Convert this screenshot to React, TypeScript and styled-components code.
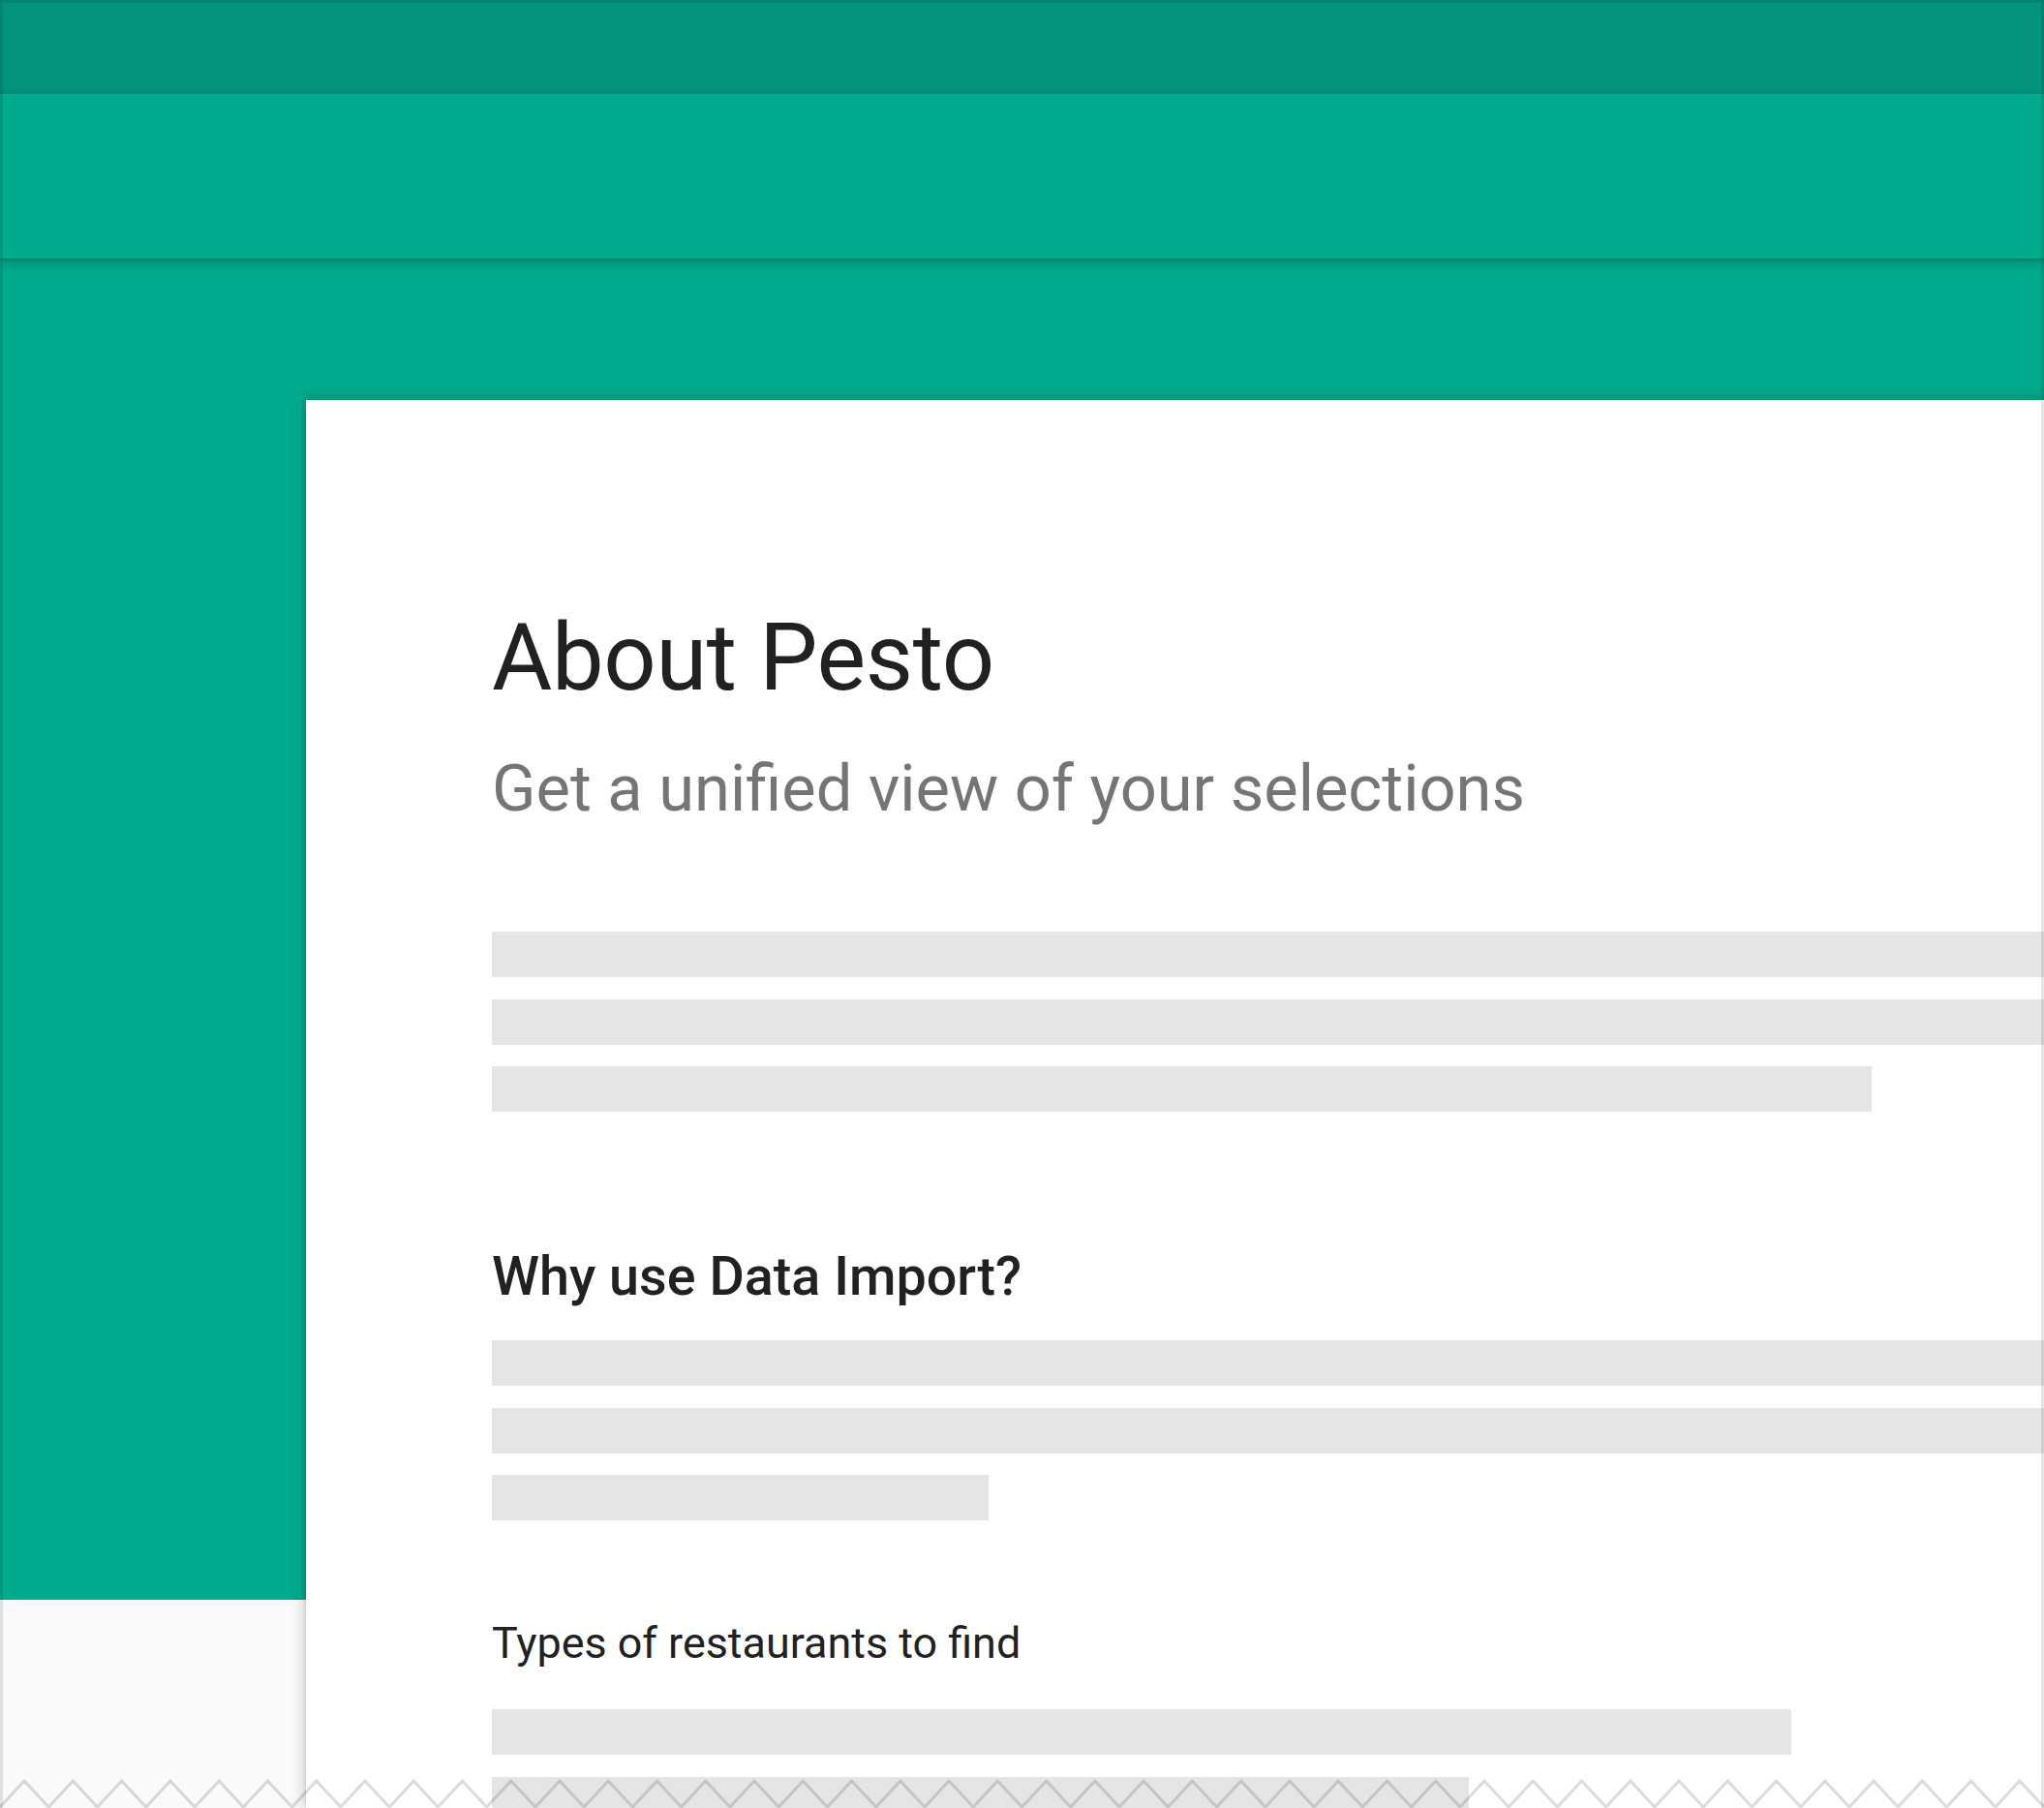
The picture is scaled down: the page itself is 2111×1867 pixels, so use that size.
import React from "react";
import styled, { createGlobalStyle } from "styled-components";

const Global = createGlobalStyle`
  html, body { margin: 0; padding: 0; background: #ffffff; overflow: hidden; }
  * { box-sizing: border-box; }
`;

const Frame = styled.div`
  position: relative;
  width: 2111px;
  height: 1867px;
  overflow: hidden;
  font-family: Roboto, "Liberation Sans", Arial, sans-serif;
  display: flex;
  flex-direction: column;
  background: #fafafa;
  &::after {
    content: "";
    position: absolute;
    inset: 0;
    border: 3px solid rgba(0, 0, 0, 0.1);
    border-bottom: none;
    pointer-events: none;
    z-index: 5;
  }
`;

const StatusBar = styled.div`
  height: 97px;
  flex: none;
  background: #03947d;
`;

const AppBar = styled.div`
  position: relative;
  z-index: 2;
  height: 170px;
  flex: none;
  background: #00aa8d;
  box-shadow: 0 1px 2px rgba(0, 0, 0, 0.22), 0 4px 10px rgba(0, 0, 0, 0.22);
`;

const Body = styled.div`
  flex: 1;
  min-height: 0;
  background: linear-gradient(#00aa8d 0 1385px, #fafafa 1385px);
  padding: 146px 0 0 316px;
  display: flex;
`;

const Card = styled.div`
  width: 1900px;
  flex: none;
  background: #ffffff;
  box-shadow: 0 0 14px rgba(0, 0, 0, 0.25), 0 0 2px rgba(0, 0, 0, 0.15);
  padding: 219px 0 0 192px;
  display: flex;
  flex-direction: column;
  align-items: flex-start;
`;

const Title = styled.h1`
  margin: 0;
  font-size: 95.5px;
  line-height: 1;
  font-weight: 400;
  color: #212121;
  letter-spacing: -0.3px;
`;

const Subtitle = styled.p`
  margin: 53px 0 0;
  font-size: 66.8px;
  line-height: 1;
  font-weight: 400;
  color: #757575;
`;

const Heading = styled.h2<{ $gap: number }>`
  margin: ${(p) => p.$gap}px 0 0;
  font-size: 55.7px;
  line-height: 1;
  font-weight: 500;
  color: #212121;
`;

const Label = styled.p<{ $gap: number }>`
  margin: ${(p) => p.$gap}px 0 0;
  font-size: 44.9px;
  line-height: 1;
  font-weight: 400;
  color: #212121;
`;

const Lines = styled.div<{ $gap: number }>`
  margin-top: ${(p) => p.$gap}px;
  align-self: stretch;
  display: flex;
  flex-direction: column;
  gap: 22.5px;
`;

const Line = styled.div<{ $w?: number }>`
  height: 47px;
  background: #e5e5e5;
  width: ${(p) => (p.$w ? `${p.$w}px` : "100%")};
`;

const Tear = styled.svg`
  position: absolute;
  left: 0;
  bottom: 0;
  width: 2111px;
  height: 30px;
  z-index: 4;
`;

function zigzag(): string {
  const teeth = 42;
  const w = 2111 / teeth;
  const pts: string[] = [];
  for (let i = 0; i <= teeth; i++) {
    pts.push(`${(i * w).toFixed(2)},29`);
    if (i < teeth) pts.push(`${(i * w + w / 2).toFixed(2)},2`);
  }
  return pts.join(" ");
}

export default function App() {
  return (
    <>
      <Global />
      <Frame>
        <StatusBar />
        <AppBar />
        <Body>
          <Card>
            <Title>About Pesto</Title>
            <Subtitle>Get a unified view of your selections</Subtitle>
            <Lines $gap={115}>
              <Line />
              <Line />
              <Line $w={1425} />
            </Lines>
            <Heading $gap={143}>Why use Data Import?</Heading>
            <Lines $gap={37}>
              <Line />
              <Line />
              <Line $w={513} />
            </Lines>
            <Label $gap={104.5}>Types of restaurants to find</Label>
            <Lines $gap={46}>
              <Line $w={1342} />
              <Line $w={1009} />
            </Lines>
          </Card>
        </Body>
        <Tear viewBox="0 0 2111 30" preserveAspectRatio="none">
          <polyline
            points={zigzag()}
            fill="none"
            stroke="rgba(0,0,0,0.14)"
            strokeWidth="3"
          />
        </Tear>
      </Frame>
    </>
  );
}
